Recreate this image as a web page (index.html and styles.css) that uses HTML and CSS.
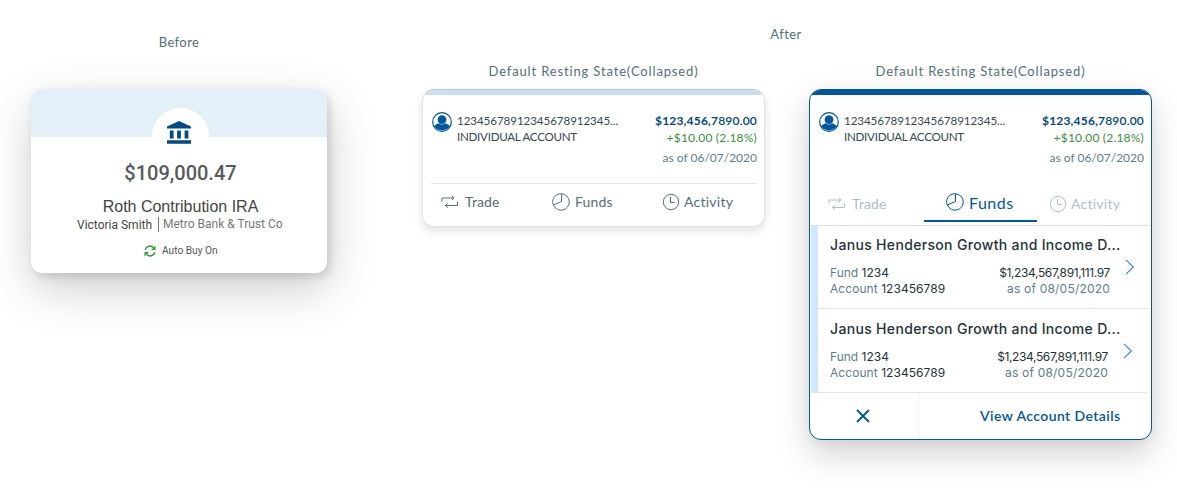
FILE: index.html
```html
<!DOCTYPE html>
<html lang="en">
<head>
<meta charset="utf-8">
<title>Account card</title>
<link rel="stylesheet" href="styles.css">
</head>
<body>
<svg width="0" height="0" class="defs">
  <symbol id="user" viewBox="0 0 20 20"><circle cx="10" cy="10" r="9.3" fill="#fff" stroke="#00579b" stroke-width="1.2"/><circle cx="10" cy="7.7" r="4.4" fill="#00579b"/><path d="M2.2 14.2C4 12 6 11.2 7 11.2Q10 13.6 13 11.2C14 11.2 16 12 17.8 14.2A9.3 9.3 0 0 1 2.2 14.2Z" fill="#00579b"/></symbol>
  <symbol id="trade" viewBox="0 0 18 14"><path d="M1 6.5V3H13M10.8 .8 13 3 10.8 5.2M16.5 6.500V10.500H4.500M6.700 8.300 4.500 10.500 6.700 12.700" fill="none" stroke="currentColor"/></symbol>
  <symbol id="pie" viewBox="0 0 18 18"><path d="M9.500 .8A8.200 8.200 0 1 1 1.500 12.100M7.900 .8A8.100 8.100 0 0 0 1.300 12L9.500 8.500V.8H7.900" fill="none" stroke="currentColor"/></symbol>
  <symbol id="clock" viewBox="0 0 18 18"><circle cx="9" cy="9" r="7.700" fill="none" stroke="currentColor"/><path d="M8.500 4V9.500H12.500" fill="none" stroke="currentColor"/></symbol>
  <symbol id="chev" viewBox="0 0 10 16"><path d="M1 .8 8.300 8 1 15.200" fill="none" stroke="currentColor" stroke-width="1.100"/></symbol>
</svg>
<main class="page">
  <section class="before">
    <h2 class="label">Before</h2>
    <article class="old-card">
      <div class="old-band"><div class="bank">
        <svg width="24" height="23" viewBox="0 0 24 23" fill="#004b87"><path d="M12 0 24 5.500V7.500H0V5.500ZM2.800 9.500H6.600V17.500H2.800ZM10.100 9.500H13.900V17.500H10.100ZM17.600 9.500H21.400V17.500H17.600ZM0 19.300H24V22.700H0Z"/></svg>
      </div></div>
      <div class="old-amount">$109,000.47</div>
      <div class="old-name">Roth Contribution IRA</div>
      <div class="old-meta"><span class="owner">Victoria Smith</span><span class="bank-name">Metro Bank &amp; Trust Co</span></div>
      <div class="auto"><svg width="12" height="12" viewBox="0 0 12 12"><path d="M1.200 4.800A4.900 4.900 0 0 1 9.500 2.700M10.800 7.200A4.900 4.900 0 0 1 2.500 9.300" fill="none" stroke="#35a03a" stroke-width="1.600"/><path d="M11.500 .5V5H7ZM.5 11.500V7H5Z" fill="#35a03a"/></svg><span>Auto Buy On</span></div>
    </article>
  </section>
  <section class="after">
    <h2 class="label after-label">After</h2>
    <div class="states">
      <div class="state">
        <h3 class="label">Default Resting State(Collapsed)</h3>
        <article class="card">
          <div class="strip"></div>
          <header class="head">
            <svg class="avatar"><use href="#user"/></svg>
            <div class="ident"><div class="num">12345678912345678912345...</div><div class="kind">INDIVIDUAL ACCOUNT</div></div>
            <div class="value"><div class="total"><b>$123,456,7</b>890.00</div><div class="gain">+$10.00 (2.18%)</div><div class="date">as of 06/07/2020</div></div>
          </header>
          <nav class="tabs">
            <div class="tab"><svg class="i-trade"><use href="#trade"/></svg><span class="t-trade">Trade</span></div>
            <div class="tab"><svg class="i-pie"><use href="#pie"/></svg><span class="t-funds">Funds</span></div>
            <div class="tab"><svg class="i-clock"><use href="#clock"/></svg><span class="t-act">Activity</span></div>
          </nav>
        </article>
      </div>
      <div class="state">
        <h3 class="label">Default Resting State(Collapsed)</h3>
        <article class="card open">
          <div class="strip"></div>
          <header class="head">
            <svg class="avatar"><use href="#user"/></svg>
            <div class="ident"><div class="num">12345678912345678912345...</div><div class="kind">INDIVIDUAL ACCOUNT</div></div>
            <div class="value"><div class="total"><b>$123,456,7</b>890.00</div><div class="gain">+$10.00 (2.18%)</div><div class="date">as of 06/07/2020</div></div>
          </header>
          <nav class="tabs">
            <div class="tab"><svg class="i-trade"><use href="#trade"/></svg><span class="t-trade">Trade</span></div>
            <div class="tab active"><svg class="i-pie"><use href="#pie"/></svg><span class="t-funds">Funds</span></div>
            <div class="tab"><svg class="i-clock"><use href="#clock"/></svg><span class="t-act">Activity</span></div>
          </nav>
          <div class="funds">
            <div class="fund">
              <div class="fund-name">Janus Henderson Growth and Income D...</div>
              <div class="fund-row">
                <div class="fund-ids"><div class="f-no">Fund <em>1234</em></div><div class="f-acc">Account <em>123456789</em></div></div>
                <div class="fund-value"><div class="f-amt">$1,234,567,891,111.97</div><div class="f-date">as of 08/05/2020</div></div>
                <svg class="chev"><use href="#chev"/></svg>
              </div>
            </div>
            <div class="fund second">
              <div class="fund-name">Janus Henderson Growth and Income D...</div>
              <div class="fund-row">
                <div class="fund-ids"><div class="f-no">Fund <em>1234</em></div><div class="f-acc">Account <em>123456789</em></div></div>
                <div class="fund-value"><div class="f-amt">$1,234,567,891,111.97</div><div class="f-date">as of 08/05/2020</div></div>
                <svg class="chev"><use href="#chev"/></svg>
              </div>
            </div>
          </div>
          <footer class="foot">
            <div class="close"><svg width="14" height="14" viewBox="0 0 14 14"><path d="M1 1 13 13M13 1 1 13" stroke="#00579b" stroke-width="1.900"/></svg></div>
            <div class="details"><span>View Account Details</span></div>
          </footer>
        </article>
      </div>
    </div>
  </section>
</main>
</body>
</html>
```

FILE: styles.css
```css
* { box-sizing: border-box; }
body { margin: 0; background: #fff; font-family: Lato, "Open Sans", sans-serif; white-space: nowrap; overflow: hidden; }
h2, h3 { margin: 0; font-weight: 400; }
svg { display: block; flex: none; }
.defs { position: absolute; }
.page { display: flex; width: 1177px; height: 496px; padding-left: 31px; }
.label { font-size: 13px; line-height: 18px; letter-spacing: .4px; color: #546e7a; text-align: center; }
.state .label { letter-spacing: .85px; }

.before { width: 296px; padding-top: 33px; }
.old-card { height: 184px; margin-top: 38px; border-radius: 11px; background: #fff; overflow: hidden; text-align: center; font-family: Roboto, sans-serif;
  box-shadow: 3px 4px 9px rgba(0,0,0,.13), 2px 16px 48px rgba(0,0,0,.2); }
.old-band { height: 48px; background: #e4f0f8; display: flex; justify-content: center; padding: 19px 0 0 2px; }
.bank { width: 57px; height: 57px; border-radius: 50%; background: #fff; padding: 13px 0 0 15px; }
.old-amount { margin-top: 24px; font-size: 20px; line-height: 24px; font-weight: 500; color: #58595b; padding-left: 3px; letter-spacing: 0; }
.old-name { margin-top: 12px; font: 16px/20px "Liberation Sans", Arial, sans-serif; color: #444; padding-left: 3px; }
.old-meta { display: flex; height: 15px; margin: 0 0 0 46px; font-size: 12px; line-height: 14px; }
.owner { color: #444; width: 81px; text-align: left; padding-top: 1px; }
.bank-name { color: #777; border-left: 1px solid #777; padding-left: 4px; }
.auto { display: flex; align-items: center; gap: 6px; margin: 12px 0 0 113px; font-size: 10.200px; line-height: 14px; color: #555; }

.after { width: 730px; margin-left: 95px; padding-top: 25px; }
.after-label { padding-right: 2px; }
.states { display: flex; gap: 44px; margin-top: 19px; }
.state { width: 343px; }
.card { margin-top: 9px; height: 138px; border: 1px solid #e0e4e7; border-radius: 12px; background: #fff; overflow: hidden;
  box-shadow: 0 4px 10px rgba(0,0,0,.12); border-top-color: #b8ccda; }
.card.open { height: 351px; border-color: #00579b; box-shadow: 0 14px 34px rgba(0,0,0,.18), 0 4px 10px rgba(0,0,0,.04); }
.strip { height: 5px; background: #cbdcea; }
.open .strip { background: #00579b; }
.head { display: flex; height: 89px; margin: 0 7px 0 8px; padding-top: 18px; border-bottom: 1px solid #e3e6e8; color: #37474f; }
.open .head { border-bottom-color: transparent; }
.avatar { width: 20px; height: 20px; margin: -1px 5px 0 1px; }
.ident { flex: 1; font-size: 11.600px; line-height: 16px; }
.num { letter-spacing: -.07px; }
.kind { letter-spacing: -.27px; }
.value { text-align: right; font-size: 12px; line-height: 17px; margin-top: -1px; }
.total { color: #00477f; font-weight: 600; letter-spacing: .19px; }
.total b { font-weight: 700; }
.gain { color: #388e3c; letter-spacing: .2px; }
.date { color: #607d8b; margin-top: 3px; }
.tabs { display: grid; grid-template-columns: 129px 110px 1fr; height: 36px; color: #546e7a; font-size: 14px; }
.tab { display: flex; align-items: center; }
.tab:first-child { padding-left: 18px; }
.i-trade { width: 18px; height: 14px; margin-right: 6px; }
.i-pie { width: 18px; height: 18px; margin-right: 5px; }
.i-clock { width: 18px; height: 18px; margin-right: 4px; }
.t-trade, .t-funds { letter-spacing: .15px; }
.t-act { letter-spacing: .25px; }
.tab span { margin-top: -1px; }
.open .tabs { grid-template-columns: 114px 113px 1fr; height: 42px; border-bottom: 1px solid #dde1e4; color: #b0bec5; margin-right: 2px; }
.open .tab { height: 40px; }
.open .tab.active { color: #00579b; font-size: 16px; height: 38px; border-bottom: 2px solid #00579b; padding-left: 22px; }
.open .active span { letter-spacing: .5px; margin-top: 0; }
.open .tab:last-child { padding-left: 12px; }
.funds { border-left: 7px solid #cde9fb; margin: 0 2px 0 1px; font-family: Inter, sans-serif; }
.fund { height: 83px; border-bottom: 1px solid #e3e6e8; padding: 9px 0 0 12px; }
.fund.second { height: 84px; padding-top: 10px; margin-right: 2px; }
.fund-name { font-size: 14px; font-weight: 500; line-height: 20px; letter-spacing: .33px; color: #263238; }
.fund-row { display: flex; margin-top: 10px; font-size: 12px; line-height: 16px; color: #607d8b; }
.fund-ids { flex: 1; }
.fund-value { text-align: right; }
.fund-row em, .f-amt { font-style: normal; color: #263238; }
.f-amt { letter-spacing: -.38px; }
.f-date { letter-spacing: .2px; }
.f-acc { letter-spacing: .06px; }
.chev { width: 10px; height: 16px; color: #3d85bd; margin: -6px 14px 0 15px; }
.foot { display: flex; height: 46px; }
.close { width: 109px; border-right: 1px solid #eceff1; display: flex; align-items: center; justify-content: center; padding-right: 3px; }
.details { padding-left: 61px; color: #00579b; font-size: 14px; font-weight: 600; line-height: 46px; letter-spacing: .42px; }
```
